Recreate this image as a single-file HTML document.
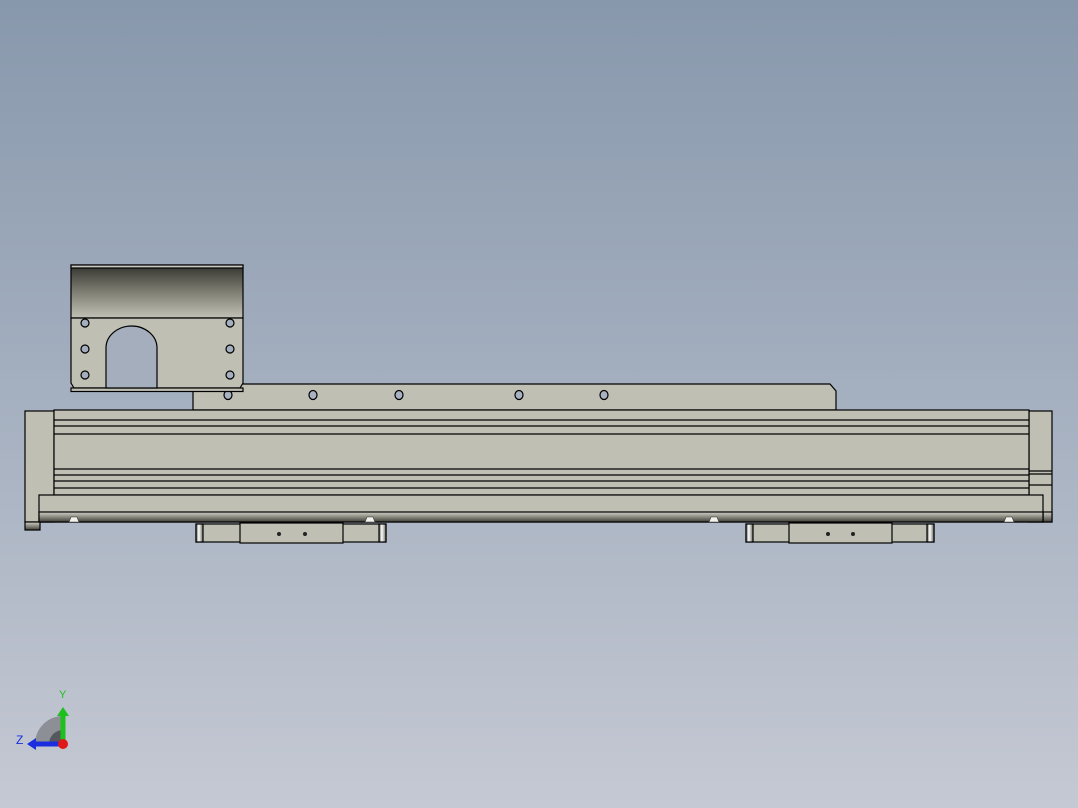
<!DOCTYPE html>
<html><head><style>
html,body{margin:0;padding:0;width:1078px;height:808px;overflow:hidden;background:linear-gradient(#8898ac,#a5b0c0 50%,#c5c9d3);}
svg{display:block}
</style></head><body>
<svg width="1078" height="808" viewBox="0 0 1078 808" xmlns="http://www.w3.org/2000/svg">
<defs>
<linearGradient id="mt" x1="0" y1="0" x2="0" y2="1"><stop offset="0" stop-color="#33342e"/><stop offset="0.5" stop-color="#7d7d72"/><stop offset="1" stop-color="#c1c1b6"/></linearGradient>
<linearGradient id="rb" x1="0" y1="0" x2="0" y2="1"><stop offset="0" stop-color="#d0d0c6"/><stop offset="0.5" stop-color="#8a8a80"/><stop offset="1" stop-color="#3e3e38"/></linearGradient>
<linearGradient id="cap" x1="0" y1="0" x2="1" y2="0"><stop offset="0" stop-color="#55554e"/><stop offset="0.4" stop-color="#ffffff"/><stop offset="1" stop-color="#6a6a62"/></linearGradient>
</defs>
<g stroke="#000" stroke-width="1.2" fill="#bfbfb4">
<!-- back plate -->
<path d="M193 410 V384 H830 L836 391 V410 Z"/>
<g fill="#a8b2c2"><ellipse cx="228" cy="395" rx="4" ry="4.5"/><ellipse cx="313" cy="395" rx="4" ry="4.5"/><ellipse cx="399" cy="395" rx="4" ry="4.5"/><ellipse cx="519" cy="395" rx="4" ry="4.5"/><ellipse cx="604" cy="395" rx="4" ry="4.5"/></g>
<!-- motor bracket -->
<rect x="71" y="265" width="172" height="53" fill="url(#mt)"/>
<rect x="71" y="265" width="172" height="3" fill="#c8c8be"/>
<path d="M71 318 H243 V383 L240 388 H74 L71 383 Z"/>
<rect x="71" y="388" width="172" height="3.5"/>
<path d="M106 388 V348 A25.5 22 0 0 1 157 348 V388 Z" fill="#a4aebd"/>
<g fill="#a4aebd"><circle cx="85" cy="323" r="4"/><circle cx="85" cy="349" r="4"/><circle cx="85" cy="375" r="4"/><circle cx="230" cy="323" r="4"/><circle cx="230" cy="349" r="4"/><circle cx="230" cy="375" r="4"/></g>
<!-- left endcap -->
<rect x="25" y="411" width="29" height="111"/>
<rect x="25" y="522" width="15" height="8" fill="url(#rb)"/>
<!-- right endcap -->
<rect x="1029" y="411" width="23" height="111"/>
<line x1="1029" y1="471" x2="1052" y2="471"/><line x1="1029" y1="474" x2="1052" y2="474"/><line x1="1029" y1="485" x2="1052" y2="485"/>
<rect x="1043" y="512" width="9" height="10" fill="url(#rb)"/>
<!-- profile -->
<rect x="54" y="410" width="975" height="85"/>
<line x1="54" y1="420" x2="1029" y2="420"/><line x1="54" y1="426" x2="1029" y2="426"/><line x1="54" y1="434" x2="1029" y2="434"/>
<line x1="54" y1="469" x2="1029" y2="469"/><line x1="54" y1="475" x2="1029" y2="475"/><line x1="54" y1="481" x2="1029" y2="481"/><line x1="54" y1="488" x2="1029" y2="488"/>
<!-- lower rail -->
<rect x="39" y="495" width="1004" height="27"/>
<rect x="39" y="512" width="1004" height="10" fill="url(#rb)"/>
</g>
<g fill="#f2f2ee" stroke="#333" stroke-width="0.6">
<path d="M69 522 L71 517 H77 L79 522Z"/><path d="M365 522 L367 517 H373 L375 522Z"/><path d="M709 522 L711 517 H717 L719 522Z"/><path d="M1004 522 L1006 517 H1012 L1014 522Z"/>
</g>
<g stroke="#000" stroke-width="1.2" fill="#bfbfb4">
<rect x="196" y="524" width="190" height="18"/>
<rect x="196" y="524" width="7" height="18" fill="url(#cap)"/><rect x="379" y="524" width="7" height="18" fill="url(#cap)"/>
<rect x="240" y="523" width="103" height="20"/>
<rect x="746" y="524" width="188" height="18"/>
<rect x="746" y="524" width="7" height="18" fill="url(#cap)"/><rect x="927" y="524" width="7" height="18" fill="url(#cap)"/>
<rect x="789" y="523" width="103" height="20"/>
</g>
<g fill="#222"><circle cx="279" cy="534" r="2"/><circle cx="305" cy="534" r="2"/><circle cx="828" cy="534" r="2"/><circle cx="853" cy="534" r="2"/></g>
<!-- triad -->
<path d="M35 744 A28 28 0 0 1 63 716 V744 Z" fill="#8c8f95"/>
<path d="M49 744 A14 14 0 0 1 63 730 V744 Z" fill="#55585e"/>
<rect x="60.5" y="715" width="5" height="28" fill="#1ec01e"/>
<path d="M57 716 L63 707 L69 716 Z" fill="#1ec01e"/>
<rect x="34" y="741.5" width="28" height="5" fill="#1a2ee0"/>
<path d="M36 738 L27 744 L36 750 Z" fill="#1a2ee0"/>
<circle cx="63" cy="744" r="5" fill="#e01818"/>
<text x="59" y="698" font-family="Liberation Sans,sans-serif" font-size="11" fill="#1ec01e">Y</text>
<text x="16" y="744" font-family="Liberation Sans,sans-serif" font-size="12" fill="#1a2ee0">Z</text>
</svg>
</body></html>
